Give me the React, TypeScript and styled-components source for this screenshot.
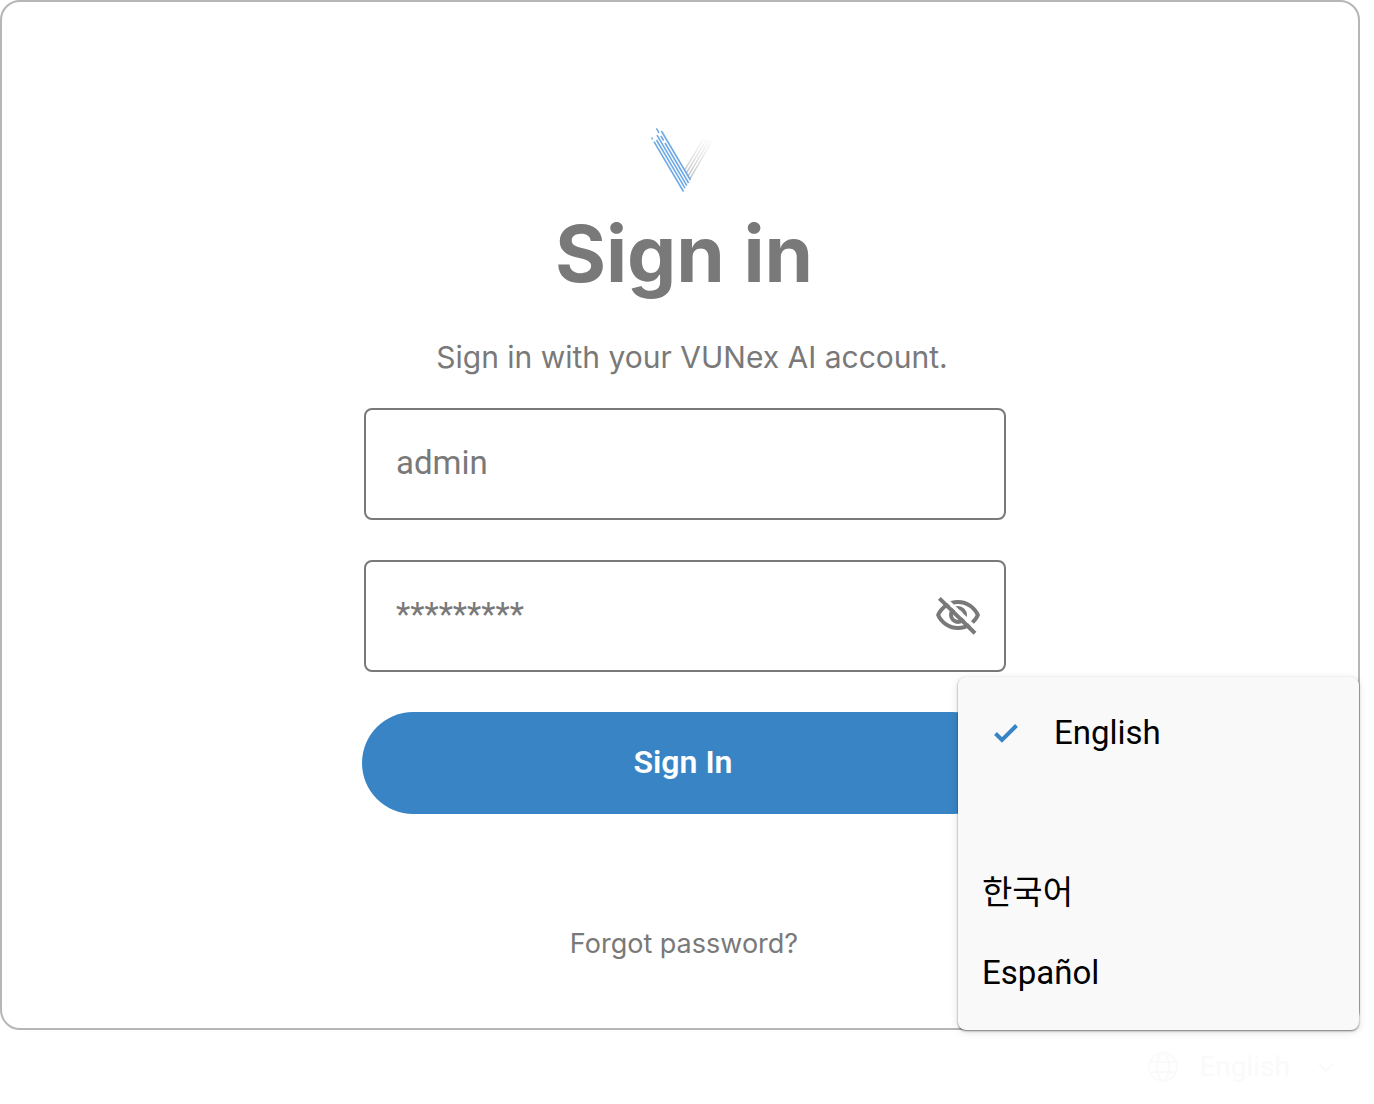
import React, { useState } from "react";
import styled, { createGlobalStyle } from "styled-components";

const GlobalStyle = createGlobalStyle`
  *, *::before, *::after { box-sizing: border-box; }
  body {
    margin: 0;
    background: #ffffff;
    font-family: Roboto, "Noto Sans CJK KR", sans-serif;
  }
`;

const ink = "#797979";
const brand = "#3884c5";

const Page = styled.div`
  display: flex;
  flex-direction: column;
  padding-right: 14px;
`;

const Card = styled.main`
  display: flex;
  flex-direction: column;
  align-items: center;
  padding: 125px 0 64px 8px;
  border: 2px solid #b6b6b6;
  border-radius: 20px;
`;

const Form = styled.form`
  display: flex;
  flex-direction: column;
  width: 100%;
  max-width: 644px;
`;

const Logo = styled.svg`
  display: block;
  align-self: center;
  width: 68px;
  height: 68px;
`;

const Title = styled.h1`
  margin: 11px 0 35px;
  color: ${ink};
  font: 700 78px/96px Inter, sans-serif;
  text-align: center;
`;

const Subtitle = styled.p`
  margin: 0 0 31px;
  padding-left: 16px;
  color: ${ink};
  font: 400 30px/40px Inter, sans-serif;
  text-align: center;
`;

const Field = styled.div`
  display: flex;
  align-items: center;
  height: 112px;
  margin: 0 0 40px 2px;
  padding: 0 22px 0 30px;
  border: 2px solid ${ink};
  border-radius: 8px;
`;

const Label = styled.label`
  width: 0;
  height: 0;
  overflow: hidden;
`;

const Input = styled.input`
  flex: 1;
  min-width: 0;
  padding: 0 0 2px;
  border: 0;
  outline: 0;
  background: transparent;
  color: ${ink};
  font: 400 33px/48px Roboto, sans-serif;

  &::placeholder {
    color: ${ink};
    opacity: 1;
  }
`;

const IconButton = styled.button`
  display: flex;
  padding: 0;
  border: 0;
  background: transparent;
  color: ${ink};
  cursor: pointer;
`;

const SubmitButton = styled.button`
  height: 102px;
  margin-right: 2px;
  padding: 0 0 2px;
  border: 0;
  border-radius: 51px;
  background: ${brand};
  color: #ffffff;
  font: 600 32px/40px Roboto, sans-serif;
  cursor: pointer;
`;

const ForgotLink = styled.a`
  align-self: center;
  margin-top: 110px;
  color: ${ink};
  font: 400 27px/40px Inter, sans-serif;
  text-decoration: none;
`;

const Footer = styled.footer`
  position: relative;
  display: flex;
  justify-content: flex-end;
  padding: 17px 26px;
`;

const LanguageTrigger = styled.button`
  display: flex;
  align-items: center;
  gap: 20px;
  padding: 0;
  border: 0;
  background: transparent;
  color: #fafafa;
  font: 400 28px/40px Roboto, sans-serif;
  cursor: pointer;
`;

const TriggerLabel = styled.span`
  padding-right: 8px;
`;

const Menu = styled.div`
  position: absolute;
  right: 1px;
  bottom: 100%;
  display: flex;
  flex-direction: column;
  width: 401px;
  padding: 16px 0 17px;
  border-radius: 8px;
  background: #f9f9f9;
  box-shadow: 0 1px 2px rgba(0, 0, 0, 0.5), 0 2px 8px rgba(0, 0, 0, 0.12);
`;

const MenuItem = styled.button<{ $current?: boolean }>`
  display: flex;
  align-items: center;
  gap: 24px;
  height: 80px;
  margin-bottom: ${(p) => (p.$current ? "80px" : "0")};
  padding: 0 24px;
  border: 0;
  background: transparent;
  color: #000000;
  font: 400 33px/48px Roboto, "Noto Sans CJK KR", sans-serif;
  text-align: left;
  cursor: pointer;
`;

const blueStripes = [
  "M1.6 10.6 2.6 12.3",
  "M4 14.6 33.5 64.5",
  "M6.5 13 35 61.2",
  "M7 8.2 36.8 58.6",
  "M6.4 1.4 9 5.8",
  "M10.8 8.8 13.6 13.5",
  "M15 16 38.6 56",
  "M11.4 4 40.4 53",
];

const greyStripes = [
  "M35 42.5 53 12.5",
  "M36.5 45.8 56.5 12.5",
  "M38.2 48.8 59.5 13",
  "M39.8 52 62 14",
];

function VLogo() {
  return (
    <Logo viewBox="0 0 68 68" fill="none" aria-hidden="true">
      <defs>
        <linearGradient id="fade" gradientUnits="userSpaceOnUse" x1="38" y1="50" x2="58" y2="12">
          <stop offset="0" stopColor="#b8b8b8" />
          <stop offset="1" stopColor="#eeeeee" stopOpacity="0.4" />
        </linearGradient>
      </defs>
      <g stroke="url(#fade)" strokeWidth="1.4">
        {greyStripes.map((d) => (
          <path key={d} d={d} />
        ))}
      </g>
      <g stroke="#6fa9e6" strokeWidth="1.6">
        {blueStripes.map((d) => (
          <path key={d} d={d} />
        ))}
      </g>
    </Logo>
  );
}

function EyeOffIcon() {
  return (
    <svg width="48" height="48" viewBox="0 0 24 24" aria-hidden="true">
      <path
        fill="currentColor"
        d="M12 6c3.79 0 7.17 2.13 8.82 5.5C19.17 14.87 15.79 17 12 17s-7.17-2.13-8.82-5.5C4.83 8.13 8.21 6 12 6m0-2C7 4 2.73 7.11 1 11.5 2.73 15.89 7 19 12 19s9.27-3.11 11-7.5C21.27 7.11 17 4 12 4z"
      />
      <circle cx="12" cy="11.5" r="3.5" fill="none" stroke="currentColor" strokeWidth="2" />
      <path d="M4.2 2 22 19.2" stroke="#ffffff" strokeWidth="1.8" />
      <path d="M2.7 3.2 20.5 20.6" stroke="currentColor" strokeWidth="2" />
    </svg>
  );
}

function CheckIcon() {
  return (
    <svg width="48" height="48" viewBox="0 0 48 48" fill="none" aria-hidden="true">
      <path d="M13.5 24.5 20 31 34.5 16.5" stroke={brand} strokeWidth="4" />
    </svg>
  );
}

function GlobeIcon() {
  return (
    <svg width="32" height="32" viewBox="0 0 32 32" fill="none" stroke="currentColor" strokeWidth="2" aria-hidden="true">
      <circle cx="16" cy="16" r="14" />
      <ellipse cx="16" cy="16" rx="6" ry="14" />
      <path d="M3 11h26M3 21h26" />
    </svg>
  );
}

function ChevronIcon() {
  return (
    <svg width="16" height="16" viewBox="0 0 16 16" fill="none" stroke="currentColor" strokeWidth="2" aria-hidden="true">
      <path d="M1 5l7 7 7-7" />
    </svg>
  );
}

export default function App() {
  const [user, setUser] = useState("admin");
  const [visible, setVisible] = useState(false);
  const [open, setOpen] = useState(true);

  return (
    <>
      <GlobalStyle />
      <Page>
        <Card>
          <Form onSubmit={(e) => e.preventDefault()}>
            <VLogo />
            <Title>Sign in</Title>
            <Subtitle>Sign in with your VUNex AI account.</Subtitle>
            <Field>
              <Label htmlFor="user" aria-label="Username" />
              <Input id="user" aria-label="Username" value={user} onChange={(e) => setUser(e.target.value)} />
            </Field>
            <Field>
              <Label htmlFor="password" aria-label="Password" />
              <Input
                id="password"
                aria-label="Password"
                type={visible ? "text" : "password"}
                placeholder="*********"
              />
              <IconButton type="button" aria-label="Show password" onClick={() => setVisible(!visible)}>
                <EyeOffIcon />
              </IconButton>
            </Field>
            <SubmitButton type="submit">Sign In</SubmitButton>
            <ForgotLink href="#forgot">Forgot password?</ForgotLink>
          </Form>
        </Card>
        <Footer>
          <LanguageTrigger type="button" aria-haspopup="menu" aria-expanded={open} onClick={() => setOpen(!open)}>
            <GlobeIcon />
            <TriggerLabel>English</TriggerLabel>
            <ChevronIcon />
          </LanguageTrigger>
          {open && (
            <Menu role="menu">
              <MenuItem type="button" role="menuitemradio" aria-checked="true" $current>
                <CheckIcon />
                English
              </MenuItem>
              <MenuItem type="button" role="menuitemradio" aria-checked="false" lang="ko">
                한국어
              </MenuItem>
              <MenuItem type="button" role="menuitemradio" aria-checked="false" lang="es">
                Español
              </MenuItem>
            </Menu>
          )}
        </Footer>
      </Page>
    </>
  );
}
